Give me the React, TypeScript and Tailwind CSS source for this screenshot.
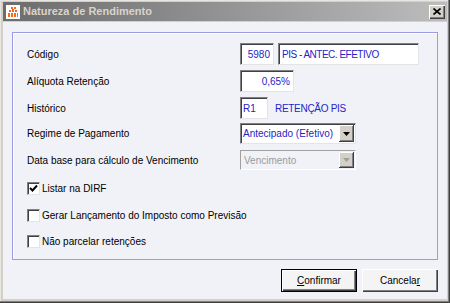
import React from 'react';

const font = { fontFamily: '"Liberation Sans", Arial, sans-serif' };

const sunken =
  'border border-t-[#808080] border-l-[#808080] border-r-[#e4e4e4] border-b-[#e4e4e4] shadow-[inset_1px_1px_0_#404040] bg-white';

const AppIcon = () => (
  <svg width="14" height="14" viewBox="0 0 14 14">
    <rect width="14" height="14" fill="#ffffff" />
    <g fill="#f26a1b">
      <rect x="5" y="2" width="2" height="2" />
      <rect x="8" y="2" width="2" height="2" />
      <rect x="3" y="5" width="2" height="2" />
      <rect x="6" y="4" width="2" height="3" />
      <rect x="9" y="5" width="2" height="2" />
      <rect x="2" y="8" width="2" height="4" />
      <rect x="5" y="8" width="2" height="4" />
      <rect x="8" y="8" width="2" height="4" />
      <rect x="11" y="8" width="1" height="4" />
    </g>
  </svg>
);

const DropButton = ({ disabled }: { disabled?: boolean }) => (
  <div className="w-[15px] h-full bg-[#d4d0c8] shadow-[inset_-1px_-1px_0_#404040,inset_1px_1px_0_#ffffff,inset_-2px_-2px_0_#808080] flex items-center justify-center">
    <svg width="7" height="4" viewBox="0 0 7 4">
      <polygon points="0,0 7,0 3.5,4" fill={disabled ? '#a0a0a0' : '#000000'} />
    </svg>
  </div>
);

const Checkbox = ({ checked, label }: { checked?: boolean; label: string }) => (
  <div className="flex items-center h-[22px] gap-[2px]">
    <div className={`w-[13px] h-[13px] ${sunken} flex items-center justify-center`}>
      {checked && (
        <svg width="9" height="9" viewBox="0 0 9 9">
          <path d="M1 4 L3.5 6.5 L8 1.5" stroke="#000" strokeWidth="2" fill="none" />
        </svg>
      )}
    </div>
    <span className="text-[10px] text-black">{label}</span>
  </div>
);

const Row = ({ label, className, children }: { label: string; className: string; children: React.ReactNode }) => (
  <div className={`flex items-center ${className}`}>
    <span className="w-[213px] text-[10px] text-black">{label}</span>
    <div className="flex items-center gap-[4px] h-full">{children}</div>
  </div>
);

const WinButton = ({ children, isDefault }: { children: React.ReactNode; isDefault?: boolean }) => (
  <div
    className={`w-[76px] h-[23px] bg-[#f4f4f4] flex items-center justify-center text-[10px] text-black ${
      isDefault
        ? 'border border-black shadow-[inset_1px_1px_0_#ffffff,inset_-1px_-1px_0_#404040,inset_-2px_-2px_0_#808080]'
        : 'shadow-[inset_1px_1px_0_#ffffff,inset_-1px_-1px_0_#404040,inset_-2px_-2px_0_#808080]'
    }`}
  >
    {children}
  </div>
);

export default function App() {
  return (
    <div
      style={font}
      className="w-[450px] h-[303px] bg-[#d4d0c8] p-[2px] shadow-[inset_-1px_-1px_0_#404040,inset_-2px_-2px_0_#808080,inset_1px_1px_0_#e8e6e0] flex flex-col overflow-hidden"
    >
      {/* title bar */}
      <div className="h-[19px] mx-[1px] mt-[0px] bg-gradient-to-r from-[#6c6c6c] to-[#bdbdbd] flex items-center pl-[3px] pr-[2px]">
        <AppIcon />
        <span className="ml-[3px] text-[11px] font-bold text-[#d8d4cc]">Natureza de Rendimento</span>
        <div className="ml-auto w-[16px] h-[14px] bg-[#d4d0c8] shadow-[inset_1px_1px_0_#ffffff,inset_-1px_-1px_0_#404040,inset_-2px_-2px_0_#808080] flex items-center justify-center">
          <svg width="8" height="7" viewBox="0 0 8 7">
            <path d="M0.5 0.5 L7.5 6.5 M7.5 0.5 L0.5 6.5" stroke="#000" strokeWidth="1.6" />
          </svg>
        </div>
      </div>

      {/* client */}
      <div className="flex-1 mx-[1px] mb-[2px] mt-[1px] bg-[#f1f2f8] flex flex-col">
        <div className="ml-[9px] mt-[10px] w-[426px] h-[228px] border border-[#9c9ce2] shadow-[inset_1px_1px_0_#ffffff] pl-[14px] pt-[10px] flex flex-col">
          <Row label="Código" className="h-[22px]">
            <div className={`${sunken} w-[34px] h-[22px] flex items-center justify-end pr-[3px] text-[10px] text-[#2424c8]`}>
              5980
            </div>
            <div className={`${sunken} w-[141px] h-[22px] flex items-center pl-[3px] text-[10px] text-[#2424c8] tracking-[-0.5px]`}>
              PIS - ANTEC. EFETIVO
            </div>
          </Row>
          <Row label="Alíquota Retenção" className="h-[22px] mt-[5px]">
            <div className={`${sunken} w-[54px] h-[22px] flex items-center justify-end pr-[3px] text-[10px] text-[#2424c8]`}>
              0,65%
            </div>
          </Row>
          <Row label="Histórico" className="h-[22px] mt-[5px]">
            <div className={`${sunken} w-[28px] h-[22px] flex items-center pl-[2px] text-[10px] text-[#2424c8]`}>
              R1
            </div>
            <span className="ml-[3px] text-[10px] text-[#2424c8] tracking-[-0.3px]">RETENÇÃO PIS</span>
          </Row>
          <Row label="Regime de Pagamento" className="h-[21px] mt-[4px]">
            <div className={`${sunken} w-[116px] h-[21px] flex items-center pl-[2px] pr-[1px] py-[1px] text-[10px] text-[#2424c8]`}>
              <span className="flex-1">Antecipado (Efetivo)</span>
              <DropButton />
            </div>
          </Row>
          <Row label="Data base para cálculo de Vencimento" className="h-[20px] mt-[6px]">
            <div className="w-[116px] h-[20px] border border-t-[#a0a0a0] border-l-[#a0a0a0] border-r-[#ffffff] border-b-[#ffffff] bg-[#f1f2f8] flex items-center pl-[3px] pr-[1px] py-[1px] text-[10px] text-[#9a9a9a]">
              <span className="flex-1">Vencimento</span>
              <DropButton disabled />
            </div>
          </Row>
          <div className="mt-[7px]">
            <Checkbox checked label="Listar na DIRF" />
          </div>
          <div className="mt-[5px]">
            <Checkbox label="Gerar Lançamento do Imposto como Previsão" />
          </div>
          <div className="mt-[4px]">
            <Checkbox label="Não parcelar retenções" />
          </div>
        </div>

        <div className="mt-[9px] flex justify-end gap-[5px] pr-[9px]">
          <WinButton isDefault>
            <span>
              <span className="underline">C</span>onfirmar
            </span>
          </WinButton>
          <WinButton>
            <span>
              Cancela<span className="underline">r</span>
            </span>
          </WinButton>
        </div>
      </div>
    </div>
  );
}
